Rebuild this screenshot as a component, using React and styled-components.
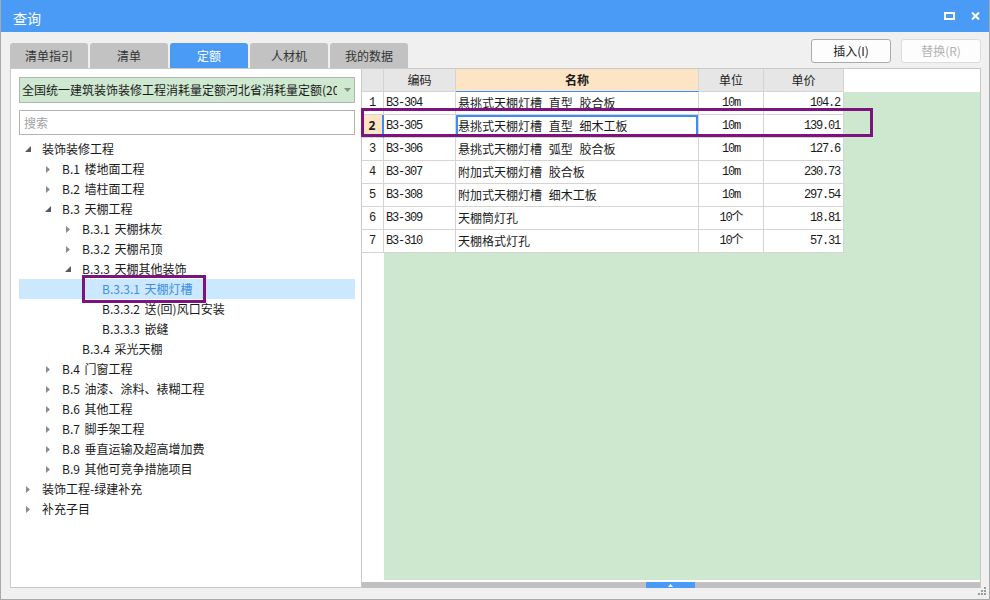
import styled, { createGlobalStyle } from "styled-components";

const GlobalStyle = createGlobalStyle`
  html, body { margin: 0; padding: 0; background: #fff; }
  body {
    font-family: "Noto Sans CJK SC", "Noto Sans", sans-serif;
    font-size: 12px;
    color: #1a1a1a;
  }
  * { box-sizing: border-box; }
`;

const Window = styled.div`
  position: relative;
  width: 990px;
  height: 600px;
  background: #f0f0f0;
  border: 1px solid #a9a9a9;
  border-top: none;
  display: flex;
  flex-direction: column;
  overflow: hidden;
`;

const TitleBar = styled.div`
  height: 32px;
  margin: 0 -1px;
  background: #4a9bf6;
  color: #fff;
  display: flex;
  align-items: center;
  padding: 0 10px 0 13px;
  h1 {
    margin: 4px 0 0;
    font-size: 14px;
    font-weight: normal;
    line-height: 16px;
  }
`;

const TitleButtons = styled.div`
  margin-left: auto;
  display: flex;
  align-items: center;
  gap: 16px;
  svg { display: block; }
`;

const Body = styled.div`
  flex: 1;
  display: flex;
  flex-direction: column;
  padding: 7px 8px 11px 9px;
`;

const Toolbar = styled.div`
  height: 29px;
  display: flex;
  align-items: flex-start;
`;

const Tabs = styled.div`
  display: flex;
  gap: 2px;
  align-self: flex-end;
`;

const Tab = styled.div`
  width: 78px;
  height: 25px;
  border-radius: 3px 3px 0 0;
  background: ${({ $active }) => ($active ? "#4a9bf6" : "#c2c2c2")};
  color: ${({ $active }) => ($active ? "#fff" : "#333")};
  text-align: center;
  line-height: 25px;
  font-size: 12px;
`;

const Buttons = styled.div`
  margin-left: auto;
  display: flex;
  gap: 10px;
`;

const Button = styled.button`
  width: 80px;
  height: 24px;
  padding: 0;
  border-radius: 3px;
  background: #fdfdfd;
  border: 1px solid ${({ disabled }) => (disabled ? "#dcdcdc" : "#ababab")};
  color: ${({ disabled }) => (disabled ? "#b3b3b3" : "#1a1a1a")};
  font-family: inherit;
  font-size: 12px;
  line-height: 22px;
`;

const Panels = styled.div`
  flex: 1;
  display: flex;
`;

const LeftPanel = styled.div`
  width: 352px;
  background: #fff;
  border: 1px solid #c9c9c9;
  padding: 8px 6px 0 8px;
  display: flex;
  flex-direction: column;
`;

const Dropdown = styled.div`
  height: 26px;
  border: 1px solid #b4b4b4;
  background: #cfe8d0;
  display: flex;
  align-items: center;
  padding-left: 2px;
  span {
    width: 315px;
    white-space: nowrap;
    overflow: hidden;
    line-height: 24px;
  }
  svg { margin-left: 7px; }
`;

const Search = styled.input`
  margin-top: 7px;
  height: 25px;
  border: 1px solid #b4b4b4;
  padding: 0 0 0 4px;
  font-family: inherit;
  font-size: 12px;
  outline: none;
  &::placeholder { color: #a3a3a3; }
`;

const Tree = styled.div`
  margin-top: 4px;
`;

const TreeRow = styled.div`
  position: relative;
  height: 20px;
  display: flex;
  align-items: center;
  padding-left: ${({ $level }) => 4 + $level * 20}px;
  background: ${({ $selected }) => ($selected ? "#cce8ff" : "transparent")};
  color: ${({ $selected }) => ($selected ? "#3a8ee6" : "#1a1a1a")};
  line-height: 20px;
  white-space: pre;
  word-spacing: 2px;
`;

const Caret = styled.span`
  width: 10px;
  height: 10px;
  margin-right: 9px;
  display: flex;
  align-items: center;
  justify-content: center;
  svg { display: block; }
`;

const TreeMark = styled.div`
  position: absolute;
  left: 63px;
  top: -4px;
  width: 124px;
  height: 28px;
  border: 3px solid #7c137f;
`;

const RightPanel = styled.div`
  flex: 1;
  background: #fff;
  border-top: 1px solid #c9c9c9;
  border-right: 1px solid #c9c9c9;
  display: flex;
  flex-direction: column;
`;

const GridArea = styled.div`
  flex: 1;
  position: relative;
  background: linear-gradient(#cde8cf, #cde8cf) 22px 23px / calc(100% - 22px) calc(100% - 25px) no-repeat, #fff;
`;

const Grid = styled.div`
  display: grid;
  width: 482px;
  grid-template-columns: 22px 72px 243px 65px 80px;
  grid-auto-rows: 23px;
`;

const Cell = styled.div`
  border-right: 1px solid #d4d4d4;
  border-bottom: 1px solid #d4d4d4;
  background: #fff;
  line-height: 22px;
  white-space: nowrap;
  overflow: hidden;
  text-align: ${({ $align }) => $align || "left"};
  padding: ${({ $align }) => ($align === "right" ? "0 3px 0 0" : $align === "center" ? "0" : "0 0 0 2px")};
  font-family: ${({ $mono }) => ($mono ? '"Liberation Mono", "Noto Sans CJK SC", monospace' : "inherit")};
  letter-spacing: ${({ $mono }) => ($mono ? "-1.2px" : "normal")};
  font-size: 12px;
`;

const HeadCell = styled(Cell)`
  background: ${({ $hot }) => ($hot ? "#fde4c4" : "#e6e6e6")};
  font-weight: ${({ $hot }) => ($hot ? "bold" : "normal")};
  border-bottom-color: ${({ $hot }) => ($hot ? "#3b8ef4" : "#d4d4d4")};
  text-align: center;
  padding: 0;
`;

const NumCell = styled(Cell)`
  text-align: center;
  padding: 0;
  background: ${({ $selected }) => ($selected ? "#fde4c4" : "#fff")};
  font-weight: ${({ $selected }) => ($selected ? "bold" : "normal")};
  font-family: ${({ $selected }) => ($selected ? '"Noto Sans", sans-serif' : '"Liberation Mono", monospace')};
  border-right: ${({ $selected }) => ($selected ? "2px solid #3b8ef4" : "1px solid #d4d4d4")};
`;

const NameCell = styled(Cell)`
  word-spacing: 4px;
  box-shadow: ${({ $focus }) => ($focus ? "inset 0 0 0 2px #3b8ef4" : "none")};
`;

const RowMark = styled.div`
  position: absolute;
  left: -1px;
  top: 39px;
  width: 512px;
  height: 29px;
  border: 3px solid #7c137f;
`;

const Scrollbar = styled.div`
  height: 6px;
  background: #c0c0c0;
  display: flex;
`;

const Thumb = styled.div`
  margin-left: 284px;
  width: 49px;
  height: 6px;
  background: #4a9bf6;
  display: flex;
  align-items: center;
  justify-content: center;
  svg { display: block; }
`;

const Grip = styled.svg`
  position: absolute;
  right: 2px;
  bottom: 3px;
`;

const tabs = ["清单指引", "清单", "定额", "人材机", "我的数据"];

const tree = [
  { l: 0, t: "装饰装修工程", c: "open" },
  { l: 1, t: "B.1 楼地面工程", c: "closed" },
  { l: 1, t: "B.2 墙柱面工程", c: "closed" },
  { l: 1, t: "B.3 天棚工程", c: "open" },
  { l: 2, t: "B.3.1 天棚抹灰", c: "closed" },
  { l: 2, t: "B.3.2 天棚吊顶", c: "closed" },
  { l: 2, t: "B.3.3 天棚其他装饰", c: "open" },
  { l: 3, t: "B.3.3.1 天棚灯槽", sel: true },
  { l: 3, t: "B.3.3.2 送(回)风口安装" },
  { l: 3, t: "B.3.3.3 嵌缝" },
  { l: 2, t: "B.3.4 采光天棚" },
  { l: 1, t: "B.4 门窗工程", c: "closed" },
  { l: 1, t: "B.5 油漆、涂料、裱糊工程", c: "closed" },
  { l: 1, t: "B.6 其他工程", c: "closed" },
  { l: 1, t: "B.7 脚手架工程", c: "closed" },
  { l: 1, t: "B.8 垂直运输及超高增加费", c: "closed" },
  { l: 1, t: "B.9 其他可竞争措施项目", c: "closed" },
  { l: 0, t: "装饰工程-绿建补充", c: "closed" },
  { l: 0, t: "补充子目", c: "closed" },
];

const rows = [
  ["B3-304", "悬挑式天棚灯槽 直型 胶合板", "10m", "104.2"],
  ["B3-305", "悬挑式天棚灯槽 直型 细木工板", "10m", "139.01"],
  ["B3-306", "悬挑式天棚灯槽 弧型 胶合板", "10m", "127.6"],
  ["B3-307", "附加式天棚灯槽 胶合板", "10m", "230.73"],
  ["B3-308", "附加式天棚灯槽 细木工板", "10m", "297.54"],
  ["B3-309", "天棚筒灯孔", "10个", "18.81"],
  ["B3-310", "天棚格式灯孔", "10个", "57.31"],
];

const CaretIcon = ({ state }) => {
  if (state === "open")
    return (
      <svg width="6" height="6" viewBox="0 0 6 6">
        <polygon points="6,0 6,6 0,6" fill="#595959" />
      </svg>
    );
  if (state === "closed")
    return (
      <svg width="4" height="7" viewBox="0 0 4 7">
        <polygon points="0,0 4,3.5 0,7" fill="#8c8c8c" />
      </svg>
    );
  return null;
};

const App = () => {
  const selectedRow = 1;
  return (
    <>
      <GlobalStyle />
      <Window>
        <TitleBar>
          <h1>查询</h1>
          <TitleButtons>
            <svg width="11" height="8" viewBox="0 0 11 8">
              <rect x="1" y="1" width="9" height="6" fill="none" stroke="#fff" strokeWidth="2" />
            </svg>
            <svg width="9" height="8" viewBox="0 0 9 8">
              <path d="M1 0.5 L8 7.5 M8 0.5 L1 7.5" stroke="#fff" strokeWidth="2" />
            </svg>
          </TitleButtons>
        </TitleBar>
        <Body>
          <Toolbar>
            <Tabs>
              {tabs.map((t) => (
                <Tab key={t} $active={t === "定额"}>{t}</Tab>
              ))}
            </Tabs>
            <Buttons>
              <Button type="button">插入(I)</Button>
              <Button type="button" disabled>替换(R)</Button>
            </Buttons>
          </Toolbar>
          <Panels>
            <LeftPanel>
              <Dropdown>
                <span>全国统一建筑装饰装修工程消耗量定额河北省消耗量定额(2012)</span>
                <svg width="7" height="4" viewBox="0 0 7 4">
                  <polygon points="0,0 7,0 3.5,4" fill="#8a8a8a" />
                </svg>
              </Dropdown>
              <Search placeholder="搜索" />
              <Tree>
                {tree.map((n) => (
                  <TreeRow key={n.t} $level={n.l} $selected={n.sel}>
                    <Caret><CaretIcon state={n.c} /></Caret>
                    {n.t}
                    {n.sel && <TreeMark />}
                  </TreeRow>
                ))}
              </Tree>
            </LeftPanel>
            <RightPanel>
              <GridArea>
                <Grid>
                  <HeadCell />
                  <HeadCell>编码</HeadCell>
                  <HeadCell $hot>名称</HeadCell>
                  <HeadCell>单位</HeadCell>
                  <HeadCell>单价</HeadCell>
                  {rows.map((r, i) => {
                    const sel = i === selectedRow;
                    return [
                      <NumCell key={`n${i}`} $selected={sel}>{i + 1}</NumCell>,
                      <Cell key={`c${i}`} $mono>{r[0]}</Cell>,
                      <NameCell key={`m${i}`} $focus={sel}>{r[1]}</NameCell>,
                      <Cell key={`u${i}`} $mono $align="center">{r[2]}</Cell>,
                      <Cell key={`p${i}`} $mono $align="right">{r[3]}</Cell>,
                    ];
                  })}
                </Grid>
                <RowMark />
              </GridArea>
              <Scrollbar>
                <Thumb>
                  <svg width="5" height="3" viewBox="0 0 5 3">
                    <polygon points="2.5,0 5,3 0,3" fill="#fff" />
                  </svg>
                </Thumb>
              </Scrollbar>
            </RightPanel>
          </Panels>
        </Body>
        <Grip width="9" height="9" viewBox="0 0 9 9">
          <g fill="#9a9a9a">
            <rect x="6" y="0" width="2" height="2" />
            <rect x="3" y="3" width="2" height="2" />
            <rect x="6" y="3" width="2" height="2" />
            <rect x="0" y="6" width="2" height="2" />
            <rect x="3" y="6" width="2" height="2" />
            <rect x="6" y="6" width="2" height="2" />
          </g>
        </Grip>
      </Window>
    </>
  );
};

export default App;
